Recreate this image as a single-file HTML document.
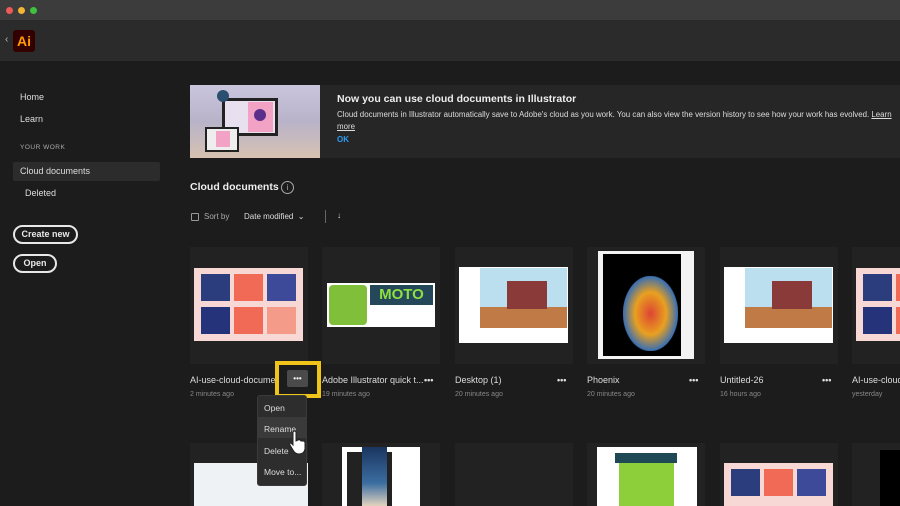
<!DOCTYPE html>
<html><head><meta charset="utf-8"><style>
*{margin:0;padding:0;box-sizing:border-box}
html,body{width:900px;height:506px;overflow:hidden}
body{background:#1c1c1c;font-family:"Liberation Sans",sans-serif;color:#e8e8e8;position:relative}
.a{position:absolute}
.t{font-size:9px;color:#ddd;white-space:nowrap}
.s{font-size:7px;color:#888;white-space:nowrap}
.card{position:absolute;width:118px;height:117px;background:#222;top:247px}
.card2{position:absolute;width:118px;height:63px;background:#222;top:443px;overflow:hidden}
.dots{position:absolute;font-size:9px;font-weight:bold;color:#ddd;letter-spacing:0px}
</style></head><body>
<div class="a" style="left:0;top:0;width:900px;height:21px;background:#3c3c3c;border-bottom:1px solid #2a2a2a"></div>
<div class="a" style="left:6px;top:7px;width:7px;height:7px;border-radius:50%;background:#ee5a55"></div>
<div class="a" style="left:18px;top:7px;width:7px;height:7px;border-radius:50%;background:#f3b534"></div>
<div class="a" style="left:30px;top:7px;width:7px;height:7px;border-radius:50%;background:#3fc23f"></div>
<div class="a" style="left:0;top:21px;width:900px;height:40px;background:#2b2b2b"></div>
<div class="a" style="left:5px;top:34px;font-size:10px;color:#bbb">‹</div>
<div class="a" style="left:13px;top:30px;width:22px;height:22px;background:#330000;border-radius:3px;color:#ff9a00;font-weight:bold;font-size:14px;text-align:center;line-height:22px">Ai</div>

<div class="a t" style="left:20px;top:92px">Home</div>
<div class="a t" style="left:20px;top:114px">Learn</div>
<div class="a" style="left:20px;top:144px;font-size:6.5px;color:#aaa;letter-spacing:.5px">YOUR WORK</div>
<div class="a" style="left:13px;top:162px;width:147px;height:19px;background:#2c2c2c;border-radius:2px"></div>
<div class="a t" style="left:20px;top:166px">Cloud documents</div>
<div class="a t" style="left:25px;top:188px">Deleted</div>
<div class="a" style="left:13px;top:225px;width:65px;height:19px;border:2px solid #e8e8e8;border-radius:10px;font-size:9px;font-weight:bold;text-align:center;line-height:15px">Create new</div>
<div class="a" style="left:13px;top:254px;width:44px;height:19px;border:2px solid #e8e8e8;border-radius:10px;font-size:9px;font-weight:bold;text-align:center;line-height:15px">Open</div>

<div class="a" style="left:190px;top:85px;width:710px;height:73px;background:#262626"></div>
<div class="a" style="left:190px;top:85px;width:130px;height:73px;background:linear-gradient(180deg,#c9c5dd,#b9b3c9 50%,#d6c2b2)">
 <div class="a" style="left:32px;top:13px;width:56px;height:38px;border:3px solid #222;background:#e8e0ee"></div>
 <div class="a" style="left:58px;top:17px;width:25px;height:30px;background:#f2a2c4"></div>
 <div class="a" style="left:64px;top:24px;width:12px;height:12px;border-radius:50%;background:#5a2e8a"></div>
 <div class="a" style="left:15px;top:42px;width:34px;height:25px;border:2px solid #222;background:#eee"></div>
 <div class="a" style="left:26px;top:46px;width:14px;height:16px;background:#f2a2c4"></div>
 <div class="a" style="left:27px;top:5px;width:12px;height:12px;border-radius:50%;background:#2b4f6e"></div>
</div>
<div class="a" style="left:337px;top:93px;font-size:10.5px;font-weight:bold;color:#eee">Now you can use cloud documents in Illustrator</div>
<div class="a" style="left:337px;top:110px;font-size:7.9px;color:#ddd;white-space:nowrap">Cloud documents in Illustrator automatically save to Adobe's cloud as you work. You can also view the version history to see how your work has evolved. <u>Learn</u></div>
<div class="a" style="left:337px;top:122px;font-size:7.9px;color:#ddd"><u>more</u></div>
<div class="a" style="left:337px;top:135px;font-size:8px;font-weight:bold;color:#2d9bf0">OK</div>

<div class="a" style="left:190px;top:181px;font-size:10.5px;font-weight:bold;color:#eee">Cloud documents</div>
<div class="a" style="left:281px;top:181px;width:13px;height:13px;border:1px solid #aaa;border-radius:50%;font-size:8px;text-align:center;line-height:11px;color:#aaa">i</div>
<div class="a" style="left:191px;top:213px;width:8px;height:8px;border:1px solid #999;border-radius:1px"></div>
<div class="a" style="left:204px;top:212px;font-size:8px;color:#aaa">Sort by</div>
<div class="a" style="left:244px;top:212px;font-size:8px;color:#ddd">Date modified &nbsp;⌄</div>
<div class="a" style="left:325px;top:210px;width:1px;height:13px;background:#666"></div>
<div class="a" style="left:337px;top:211px;font-size:8px;color:#ddd">↓</div>

<!-- row 1 -->
<div class="card" style="left:190px"><div class="a" style="left:4px;top:21px;width:109px;height:73px;background:#f7d8d4">
 <div class="a" style="left:7px;top:6px;width:29px;height:27px;background:#2b3d7d"></div>
 <div class="a" style="left:40px;top:6px;width:29px;height:27px;background:#f06a55"></div>
 <div class="a" style="left:73px;top:6px;width:29px;height:27px;background:#3d4a9a"></div>
 <div class="a" style="left:7px;top:39px;width:29px;height:27px;background:#24337a"></div>
 <div class="a" style="left:40px;top:39px;width:29px;height:27px;background:#f06a55"></div>
 <div class="a" style="left:73px;top:39px;width:29px;height:27px;background:#f59b8a"></div>
</div></div>
<div class="card" style="left:322px"><div class="a" style="left:5px;top:36px;width:108px;height:44px;background:#fff">
 <div class="a" style="left:2px;top:2px;width:38px;height:40px;background:#7fbf3a;border-radius:4px"></div>
 <div class="a" style="left:43px;top:2px;width:63px;height:20px;background:#24475a;color:#8ee040;font-weight:bold;font-size:15px;text-align:center;line-height:20px">MOTO</div>
</div></div>
<div class="card" style="left:455px"><div class="a" style="left:4px;top:20px;width:109px;height:76px;background:#fff">
 <div class="a" style="left:21px;top:1px;width:87px;height:60px;background:linear-gradient(180deg,#bcdff0 65%,#c07a45 65%)"></div>
 <div class="a" style="left:48px;top:14px;width:40px;height:28px;background:#8b3a3a"></div>
</div></div>
<div class="card" style="left:587px"><div class="a" style="left:11px;top:4px;width:96px;height:108px;background:#f3f3f3">
 <div class="a" style="left:5px;top:3px;width:78px;height:102px;background:#000"></div>
 <div class="a" style="left:25px;top:25px;width:55px;height:75px;background:radial-gradient(#d43,#e8a020 40%,#3b6fb0 70%,#000 72%)"></div>
</div></div>
<div class="card" style="left:720px"><div class="a" style="left:4px;top:20px;width:109px;height:76px;background:#fff">
 <div class="a" style="left:21px;top:1px;width:87px;height:60px;background:linear-gradient(180deg,#bcdff0 65%,#c07a45 65%)"></div>
 <div class="a" style="left:48px;top:14px;width:40px;height:28px;background:#8b3a3a"></div>
</div></div>
<div class="card" style="left:852px"><div class="a" style="left:4px;top:21px;width:60px;height:73px;background:#f7d8d4">
 <div class="a" style="left:7px;top:6px;width:29px;height:27px;background:#2b3d7d"></div>
 <div class="a" style="left:7px;top:39px;width:29px;height:27px;background:#24337a"></div>
 <div class="a" style="left:40px;top:6px;width:20px;height:27px;background:#f06a55"></div>
 <div class="a" style="left:40px;top:39px;width:20px;height:27px;background:#f06a55"></div>
</div></div>

<div class="a t" style="left:190px;top:375px">AI-use-cloud-documen...</div>
<div class="a s" style="left:190px;top:391px">2 minutes ago</div>
<div class="a t" style="left:322px;top:375px">Adobe Illustrator quick t...</div>
<div class="a s" style="left:322px;top:391px">19 minutes ago</div>
<div class="dots" style="left:424px;top:375px">•••</div>
<div class="a t" style="left:455px;top:375px">Desktop (1)</div>
<div class="a s" style="left:455px;top:391px">20 minutes ago</div>
<div class="dots" style="left:557px;top:375px">•••</div>
<div class="a t" style="left:587px;top:375px">Phoenix</div>
<div class="a s" style="left:587px;top:391px">20 minutes ago</div>
<div class="dots" style="left:689px;top:375px">•••</div>
<div class="a t" style="left:720px;top:375px">Untitled-26</div>
<div class="a s" style="left:720px;top:391px">16 hours ago</div>
<div class="dots" style="left:822px;top:375px">•••</div>
<div class="a t" style="left:852px;top:375px">AI-use-cloud-</div>
<div class="a s" style="left:852px;top:391px">yesterday</div>

<!-- row 2 -->
<div class="card2" style="left:190px"><div class="a" style="left:4px;top:20px;width:114px;height:50px;background:#eef2f4"></div></div>
<div class="card2" style="left:322px"><div class="a" style="left:20px;top:4px;width:78px;height:66px;background:#fff"><div class="a" style="left:5px;top:5px;width:45px;height:61px;background:#222"></div><div class="a" style="left:20px;top:0;width:25px;height:60px;background:linear-gradient(#1a3560,#3b6da0 60%,#e8d8c0)"></div></div></div>
<div class="card2" style="left:455px"></div>
<div class="card2" style="left:587px"><div class="a" style="left:10px;top:4px;width:100px;height:66px;background:#fff"><div class="a" style="left:22px;top:12px;width:55px;height:54px;background:#8ccf3a"></div><div class="a" style="left:18px;top:6px;width:62px;height:10px;background:#1f4a55"></div></div></div>
<div class="card2" style="left:720px"><div class="a" style="left:4px;top:20px;width:109px;height:50px;background:#f7d8d4"><div class="a" style="left:7px;top:6px;width:29px;height:27px;background:#2b3d7d"></div><div class="a" style="left:40px;top:6px;width:29px;height:27px;background:#f06a55"></div><div class="a" style="left:73px;top:6px;width:29px;height:27px;background:#3d4a9a"></div></div></div>
<div class="card2" style="left:852px"><div class="a" style="left:28px;top:7px;width:20px;height:63px;background:#000"></div></div>

<!-- highlight + menu -->
<div class="a" style="left:275px;top:361px;width:46px;height:37px;border:4px solid #f0c419;background:#1c1c1c"></div>
<div class="a" style="left:287px;top:370px;width:21px;height:17px;background:#4a4a4a;border-radius:2px;font-size:8px;font-weight:bold;text-align:center;line-height:17px;color:#eee">•••</div>
<div class="a" style="left:257px;top:395px;width:50px;height:91px;background:#2d2d2d;border:1px solid #3a3a3a;border-radius:3px"></div>
<div class="a" style="left:257px;top:417px;width:50px;height:21px;background:#3a3a3a"></div>
<div class="a t" style="left:264px;top:403px;font-size:8.5px">Open</div>
<div class="a t" style="left:264px;top:424px;font-size:8.5px">Rename</div>
<div class="a t" style="left:264px;top:446px;font-size:8.5px">Delete</div>
<div class="a t" style="left:264px;top:467px;font-size:8.5px">Move to...</div>
<svg class="a" style="left:288px;top:430px" width="20" height="26" viewBox="0 0 20 26"><path d="M5 2 Q7 0 8 2 L8 11 L10 10 Q12 9 13 11 L15 11 Q17 11 17 13 L17 19 Q16 24 11 24 Q7 24 5 20 L2 15 Q1 13 3 13 L5 15 Z" fill="#fff" stroke="#222" stroke-width="1"/></svg>
</body></html>
